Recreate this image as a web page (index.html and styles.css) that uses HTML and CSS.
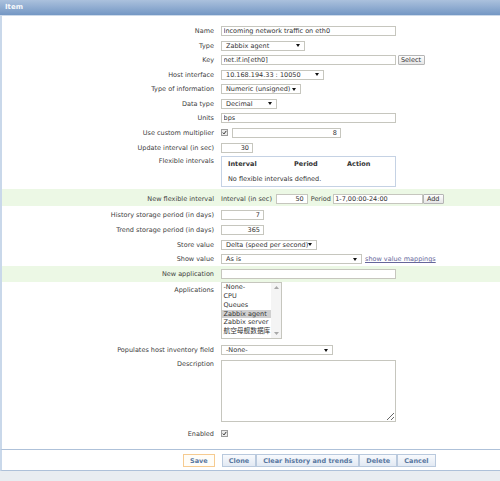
FILE: index.html
```html
<!DOCTYPE html>
<html>
<head>
<meta charset="utf-8">
<title>Item</title>
<link rel="stylesheet" href="styles.css">
</head>
<body>
<div class="page">
  <div class="hdr">Item</div>
  <div class="form">
    <div class="row r1"><span class="lbl">Name</span><div class="ctl"><input class="txt w175" value="Incoming network traffic on eth0"></div></div>
    <div class="row r1"><span class="lbl">Type</span><div class="ctl"><div class="sel w84"><span>Zabbix agent</span><svg class="arr" width="4" height="3" viewBox="0 0 4 3"><path d="M0 0H4L2 3Z"/></svg></div></div></div>
    <div class="row r1"><span class="lbl">Key</span><div class="ctl g2"><input class="txt w175" value="net.if.in[eth0]"><button class="btn w27">Select</button></div></div>
    <div class="row r1"><span class="lbl">Host interface</span><div class="ctl"><div class="sel w103"><span>10.168.194.33 : 10050</span><svg class="arr" width="4" height="3" viewBox="0 0 4 3"><path d="M0 0H4L2 3Z"/></svg></div></div></div>
    <div class="row r1"><span class="lbl">Type of information</span><div class="ctl"><div class="sel w80"><span>Numeric (unsigned)</span><svg class="arr" width="4" height="3" viewBox="0 0 4 3"><path d="M0 0H4L2 3Z"/></svg></div></div></div>
    <div class="row r1"><span class="lbl">Data type</span><div class="ctl"><div class="sel w56"><span>Decimal</span><svg class="arr" width="4" height="3" viewBox="0 0 4 3"><path d="M0 0H4L2 3Z"/></svg></div></div></div>
    <div class="row r1"><span class="lbl">Units</span><div class="ctl"><input class="txt w175" value="bps"></div></div>
    <div class="row r1"><span class="lbl">Use custom multiplier</span><div class="ctl g4"><svg class="chk" width="7" height="7" viewBox="0 0 7 7"><rect x="0.5" y="0.5" width="6" height="6" fill="#ececec" stroke="#9c9c9c"/><path d="M1.8 3.6L3 4.9L5.3 1.9" fill="none" stroke="#333" stroke-width="1"/></svg><input class="txt num w109" value="8"></div></div>
    <div class="row r1"><span class="lbl">Update interval (in sec)</span><div class="ctl"><input class="txt num w32" value="30"></div></div>
    <div class="row rflex"><span class="lbl">Flexible intervals</span><div class="ctl top">
      <div class="fbox">
        <div class="fhead"><span>Interval</span><span>Period</span><span>Action</span></div>
        <div class="fnone">No flexible intervals defined.</div>
      </div>
    </div></div>
    <div class="row green rnew"><span class="lbl">New flexible interval</span><div class="ctl">
      <span class="inl i1">Interval (in sec)</span><input class="txt num w32" value="50"><span class="inl i2">Period</span><input class="txt w90" value="1-7,00:00-24:00"><button class="btn w21 ml3">Add</button>
    </div></div>
    <div class="row r2 mt"><span class="lbl">History storage period (in days)</span><div class="ctl"><input class="txt num w43" value="7"></div></div>
    <div class="row r2"><span class="lbl">Trend storage period (in days)</span><div class="ctl"><input class="txt num w43" value="365"></div></div>
    <div class="row r2"><span class="lbl">Store value</span><div class="ctl"><div class="sel w96"><span>Delta (speed per second)</span><svg class="arr" width="4" height="3" viewBox="0 0 4 3"><path d="M0 0H4L2 3Z"/></svg></div></div></div>
    <div class="row r2"><span class="lbl">Show value</span><div class="ctl"><div class="sel w141"><span>As is</span><svg class="arr" width="4" height="3" viewBox="0 0 4 3"><path d="M0 0H4L2 3Z"/></svg></div><a class="lnk" href="#">show value mappings</a></div></div>
    <div class="row green rapp"><span class="lbl">New application</span><div class="ctl"><input class="txt w175" value=""></div></div>
    <div class="row rlist"><span class="lbl lt">Applications</span><div class="ctl top">
      <div class="lst">
        <div class="items">
          <div class="it">-None-</div>
          <div class="it">CPU</div>
          <div class="it">Queues</div>
          <div class="it on">Zabbix agent</div>
          <div class="it">Zabbix server</div>
          <div class="it cjk">航空母舰数据库</div>
        </div>
        <div class="sb">
          <svg width="5" height="3" viewBox="0 0 5 3"><path d="M0 3H5L2.5 0Z"/></svg>
          <svg width="5" height="3" viewBox="0 0 5 3"><path d="M0 0H5L2.5 3Z"/></svg>
        </div>
      </div>
    </div></div>
    <div class="row rinv"><span class="lbl">Populates host inventory field</span><div class="ctl"><div class="sel w112"><span>-None-</span><svg class="arr" width="4" height="3" viewBox="0 0 4 3"><path d="M0 0H4L2 3Z"/></svg></div></div></div>
    <div class="row rdesc"><span class="lbl">Description</span><div class="ctl top"><textarea class="ta"></textarea></div></div>
    <div class="row ren"><span class="lbl">Enabled</span><div class="ctl"><svg class="chk" width="7" height="7" viewBox="0 0 7 7"><rect x="0.5" y="0.5" width="6" height="6" fill="#ececec" stroke="#9c9c9c"/><path d="M1.8 3.6L3 4.9L5.3 1.9" fill="none" stroke="#333" stroke-width="1"/></svg></div></div>
  </div>
  <div class="footer">
    <button class="fbtn save">Save</button>
    <div class="grp">
      <button class="fbtn">Clone</button>
      <button class="fbtn">Clear history and trends</button>
      <button class="fbtn">Delete</button>
      <button class="fbtn">Cancel</button>
    </div>
  </div>
</div>
</body>
</html>
```

FILE: styles.css
```css
* { box-sizing: border-box; }
html, body { margin: 0; padding: 0; }
body {
  background: #e9edf1;
  font-family: "DejaVu Sans", Verdana, sans-serif;
  font-size: 6.5px;
  line-height: 8px;
  color: #404040;
}
.page { width: 500px; }
.hdr {
  height: 16px;
  background: linear-gradient(#abc1dd, #7497c4);
  border-bottom: 1px solid #cddaea;
  color: #f6f8fb;
  font-weight: bold;
  font-size: 7px;
  line-height: 15px;
  padding-left: 5px;
}
.form {
  background: #fff;
  border-left: 2px solid #c9d8ea;
  border-bottom: 1px solid #aec1d9;
  padding-top: 7.9px;
  height: 434px;
}
.row {
  display: grid;
  grid-template-columns: 212px 1fr;
  column-gap: 7px;
  align-items: center;
}
.r1 { height: 14.55px; }
.r2 { height: 14.6px; }
.mt { margin-top: 1.6px; }
.rflex { height: 34.65px; align-items: start; }
.rflex .lbl { padding-top: 2.2px; }
.rnew { height: 17px; padding-top: 3px; }
.rapp { height: 15.5px; }
.rlist { height: 59px; align-items: start; }
.rlist .lbl { padding-top: 4px; }
.rinv { height: 19px; }
.rdesc { height: 64px; align-items: start; }
.ren { height: 20px; }
.green { background: #ecf8e5; }
.lbl { text-align: right; white-space: nowrap; }
.ctl { display: flex; align-items: center; }
.ctl.top { align-self: start; }
.g2 { gap: 1.5px; }
.g4 { gap: 4px; }
.ml3 { margin-left: 3px; }
.txt {
  height: 10px;
  border: 1px solid #c6c6be;
  padding: 0 1.5px;
  margin: 0;
  font: inherit;
  color: #333;
  background: #fff;
  outline: none;
  flex: none;
}
.num { text-align: right; padding-right: 3px; }
.w21 { width: 21px; }
.w27 { width: 27px; }
.w32 { width: 32px; }
.w43 { width: 43px; }
.w56 { width: 56px; }
.w80 { width: 80px; }
.w84 { width: 84px; }
.w90 { width: 90px; }
.w96 { width: 96px; }
.w103 { width: 103px; }
.w109 { width: 109px; }
.w112 { width: 112px; }
.w141 { width: 141px; }
.w175 { width: 175px; }
.sel {
  height: 10px;
  border: 1px solid #c6c6be;
  background: #fff;
  color: #333;
  display: flex;
  align-items: center;
  justify-content: space-between;
  padding: 0 4px 0 4px;
  white-space: nowrap;
  flex: none;
}
.arr { fill: #111; flex: none; }
.btn {
  height: 10px;
  margin: 0;
  padding: 0;
  border: 1px solid #b5b5b5;
  border-radius: 1px;
  background: linear-gradient(#fdfdfd, #e6e6e6);
  font: inherit;
  color: #333;
  flex: none;
}
.chk { display: block; flex: none; }
.lnk {
  margin-left: 3px;
  color: #66669a;
  text-decoration: underline;
  white-space: nowrap;
}
.fbox {
  margin-top: 1.2px;
  width: 175px;
  height: 31.3px;
  border: 1px solid #c5d2e4;
  padding: 3px 0 0 6px;
}
.fhead {
  display: grid;
  grid-template-columns: 66px 53px auto;
  font-weight: bold;
  color: #333;
}
.fnone { margin-top: 7px; color: #333; }
.inl { white-space: nowrap; flex: none; }
.i1 { width: 54.7px; }
.i2 { width: 25px; padding-left: 3px; }
.lst {
  width: 61px;
  height: 57px;
  border: 1px solid #c6c6be;
  display: flex;
  background: #fff;
}
.items { flex: 1; color: #333; }
.it { height: 8.9px; line-height: 8.9px; padding-left: 1.5px; white-space: nowrap; overflow: hidden; }
.it.on { background: #d0d0d0; }
.cjk { font-family: "DejaVu Sans", "Noto Sans CJK SC", sans-serif; font-size: 6.7px; }
.sb {
  width: 10px;
  background: #f4f4f4;
  display: flex;
  flex-direction: column;
  justify-content: space-between;
  align-items: center;
  padding: 3px 0;
  fill: #a8a8a8;
}
.ta {
  display: block;
  width: 175px;
  height: 62px;
  margin: 0;
  border: 1px solid #c6c6be;
  font: inherit;
}
.footer {
  height: 21px;
  background: #fff;
  border-left: 2px solid #c9d8ea;
  border-bottom: 1px solid #aec1d9;
  display: flex;
  align-items: flex-start;
  padding: 4px 0 0 181px;
}
.grp { display: flex; margin-left: 7px; }
.fbtn {
  height: 13px;
  margin: 0;
  padding: 0 6px;
  border: 1px solid #b9c9dd;
  background: linear-gradient(#f8fafd, #e2e9f3);
  font: inherit;
  font-weight: bold;
  color: #5877a0;
  white-space: nowrap;
}
.save {
  border-color: #f6cb90;
  background: #fffdf8;
}
```
